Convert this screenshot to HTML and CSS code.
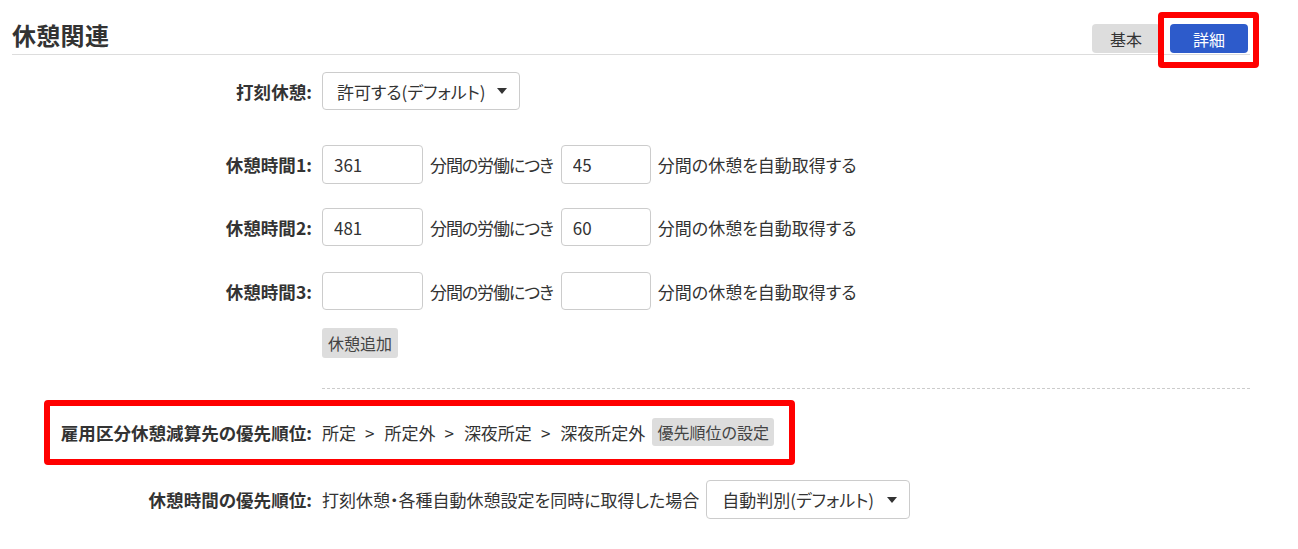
FILE: index.html
```html
<!DOCTYPE html>
<html lang="ja">
<head>
<meta charset="utf-8">
<title>休憩関連</title>
<link rel="stylesheet" href="styles.css">
</head>
<body>
<div class="page">
  <div class="head">
    <h2 class="title">休憩関連</h2>
    <div class="modes">
      <button class="mode">基本</button>
      <span class="mode-wrap">
        <button class="mode active">詳細</button>
        <span class="mark mark-mode"></span>
      </span>
    </div>
  </div>

  <div class="form">
    <div class="row row-stamp">
      <div class="lbl">打刻休憩:</div>
      <div class="ctl">
        <div class="select w-stamp">許可する(デフォルト)<span class="caret"></span></div>
      </div>
    </div>

    <div class="row row-1">
      <div class="lbl">休憩時間1:</div>
      <div class="ctl">
        <input class="inp inp-a" type="text" value="361">
        <span class="narrow">分間の労働につき</span>
        <input class="inp inp-b" type="text" value="45">
        <span>分間の休憩を自動取得する</span>
      </div>
    </div>

    <div class="row row-2">
      <div class="lbl">休憩時間2:</div>
      <div class="ctl">
        <input class="inp inp-a" type="text" value="481">
        <span class="narrow">分間の労働につき</span>
        <input class="inp inp-b" type="text" value="60">
        <span>分間の休憩を自動取得する</span>
      </div>
    </div>

    <div class="row row-3">
      <div class="lbl">休憩時間3:</div>
      <div class="ctl">
        <input class="inp inp-a" type="text" value="">
        <span class="narrow">分間の労働につき</span>
        <input class="inp inp-b" type="text" value="">
        <span>分間の休憩を自動取得する</span>
      </div>
    </div>

    <div class="row row-add">
      <div class="lbl"></div>
      <div class="ctl"><button class="btn btn-add">休憩追加</button></div>
    </div>

    <div class="row row-sep">
      <div class="lbl"></div>
      <div class="sep"></div>
    </div>

    <div class="row row-prio">
      <div class="lbl">雇用区分休憩減算先の優先順位:</div>
      <div class="ctl">
        <span class="order">所定<span class="gt">&gt;</span>所定外<span class="gt">&gt;</span>深夜所定<span class="gt">&gt;</span>深夜所定外</span>
        <button class="btn btn-prio">優先順位の設定</button>
      </div>
      <span class="mark mark-prio"></span>
    </div>

    <div class="row row-last">
      <div class="lbl">休憩時間の優先順位:</div>
      <div class="ctl">
        <span>打刻休憩・各種自動休憩設定を同時に取得した場合</span>
        <div class="select w-auto">自動判別(デフォルト)<span class="caret"></span></div>
      </div>
    </div>
  </div>
</div>
</body>
</html>
```

FILE: styles.css
```css
html, body {
  margin: 0;
  background: #fff;
}
body {
  font-family: "Noto Sans CJK JP", "Noto Sans", sans-serif;
  font-size: 17px;
  color: #333;
  font-feature-settings: "palt";
}
.page {
  padding: 0 48px 0 12px;
}
.head {
  display: flex;
  justify-content: space-between;
  align-items: flex-start;
  height: 54px;
  border-bottom: 1px solid #ddd;
}
.title {
  margin: 0;
  padding-top: 23px;
  font-size: 24px;
  line-height: 24px;
  font-weight: bold;
  color: #333;
  letter-spacing: 0.3px;
}
.modes {
  display: flex;
  gap: 10px;
  margin-top: 24px;
  margin-right: 2px;
}
.mode-wrap {
  position: relative;
  display: flex;
}
.mode {
  height: 29px;
  width: 68px;
  border: 0;
  border-radius: 4px;
  background: #ddd;
  color: #333;
  font-family: inherit;
  font-size: 16px;
  font-feature-settings: "palt";
  padding: 0;
}
.mode.active {
  width: 78px;
  background: #2d5bcb;
  color: #fff;
}
.mark {
  position: absolute;
  border: 6px solid #ff0000;
  border-radius: 4px;
  pointer-events: none;
}
.mark-mode {
  left: -12px;
  right: -11px;
  top: -12px;
  bottom: -15px;
}
.form {
  padding-top: 17px;
}
.row {
  display: grid;
  grid-template-columns: 300px 1fr;
  column-gap: 10px;
  align-items: center;
  position: relative;
}
.lbl {
  text-align: right;
  font-weight: bold;
  font-size: 17.5px;
  letter-spacing: 0.05px;
  white-space: nowrap;
}
.ctl {
  display: flex;
  align-items: center;
  gap: 7px;
  white-space: nowrap;
}
.narrow {
  letter-spacing: -1.1px;
  margin-right: 1px;
}
.order .gt {
  display: inline-block;
  margin: 0 10px 0 9px;
}
.select {
  position: relative;
  box-sizing: border-box;
  height: 38px;
  border: 1px solid #ccc;
  border-radius: 4px;
  display: flex;
  align-items: center;
  padding: 0 14px;
  background: #fff;
}
.w-stamp { width: 198px; }
.w-auto { width: 204px; height: 39px; padding-left: 15px; }
.caret {
  position: absolute;
  right: 12px;
  top: 50%;
  margin-top: -3px;
  width: 0;
  height: 0;
  border-left: 5px solid transparent;
  border-right: 5px solid transparent;
  border-top: 6px solid #333;
}
.inp {
  box-sizing: border-box;
  height: 38px;
  border: 1px solid #ccc;
  border-radius: 4px;
  padding: 0 11px;
  font-family: inherit;
  font-size: 17px;
  color: #333;
  background: #fff;
  outline: none;
}
.inp-a { width: 101px; }
.inp-b { width: 90px; }
.row-1 { margin-top: 35px; height: 39px; }
.row-1 .inp { height: 39px; }
.row-2 { margin-top: 24px; }
.row-3 { margin-top: 26px; }
.btn {
  border: 0;
  border-radius: 3px;
  background: #ddd;
  color: #444;
  font-family: inherit;
  font-size: 16px;
  font-feature-settings: "palt";
  padding: 0;
}
.row-add { margin-top: 18px; }
.btn-add { width: 76px; height: 30px; }
.row-sep { margin-top: 30px; }
.sep {
  border-top: 1px dashed #ccc;
}
.row-prio { margin-top: 29px; height: 28px; }
.btn-prio { width: 122px; height: 28px; }
.mark-prio {
  left: 32px;
  top: -18px;
  width: 751px;
  height: 65px;
  box-sizing: border-box;
}
.row-last { margin-top: 34px; }
```
